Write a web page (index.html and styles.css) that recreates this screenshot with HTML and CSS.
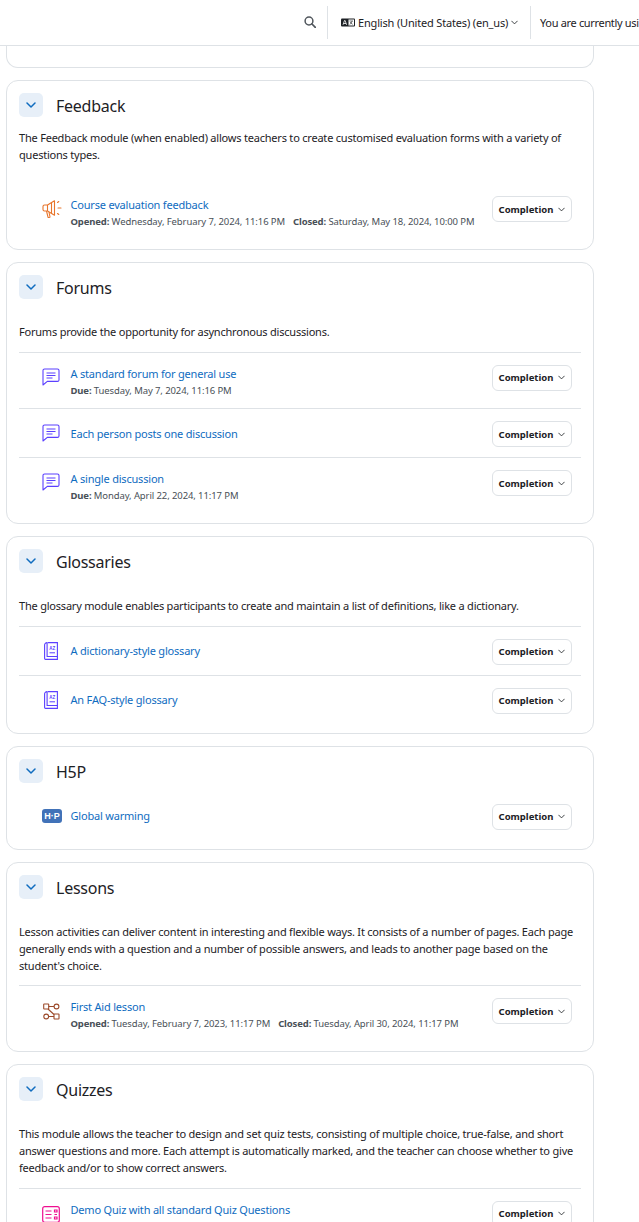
FILE: index.html
```html
<!DOCTYPE html>
<html lang="en">
<head>
<meta charset="utf-8">
<title>Activities</title>
<link rel="stylesheet" href="styles.css">
</head>
<body>
<svg class="defs" width="0" height="0" aria-hidden="true">
  <symbol id="chev" viewBox="0 0 10 6"><path d="M1 1l4 4 4-4" fill="none" stroke="currentColor" stroke-width="1.500" stroke-linecap="round" stroke-linejoin="round"/></symbol>
  <symbol id="forum" viewBox="0 0 18 18"><path d="M1 2.600c0-.9.600-1.600 1.600-1.600h12.800c.9 0 1.600.7 1.600 1.600v9.300c0 .9-.7 1.500-1.600 1.500H5.300L1 17z" fill="none" stroke="currentColor" stroke-width="1.100" stroke-linejoin="round"/><path d="M4.500 5h9M4.500 7.500h9M4.500 10h6" fill="none" stroke="currentColor" stroke-width="1.100"/></symbol>
  <symbol id="gloss" viewBox="0 0 14 18"><path d="M.6 3v13.500c0 .5.400.9.900.9h11.900V.6H3.600" fill="none" stroke="currentColor" stroke-width="1.100"/><path d="M3.100.6v13.900h10.300M.6 3c0-1.400 1-2.400 2.500-2.400" fill="none" stroke="currentColor" stroke-width="1.100"/><path d="M5.500 10.800h5.500" stroke="currentColor" stroke-width="1"/><text x="8.200" y="7.500" class="az">AZ</text></symbol>
  <symbol id="comp" viewBox="0 0 10 6"><path d="M1 1l4 4 4-4" fill="none" stroke="currentColor" stroke-width="1.200" stroke-linecap="round" stroke-linejoin="round"/></symbol>
</svg>

<header class="topbar">
  <div class="topbar-search">
    <svg width="12" height="12" viewBox="0 0 12 12"><circle cx="5" cy="5" r="3.900" fill="none" stroke="#50565c" stroke-width="1.500"/><path d="M8 8l3.300 3.300" stroke="#50565c" stroke-width="1.700" stroke-linecap="round"/></svg>
  </div>
  <div class="topbar-lang">
    <svg width="14" height="9" viewBox="0 0 14 9"><rect width="14" height="8" y=".5" rx="1" fill="#1d2125"/><path d="M2 6.800l1.500-4.300h.6l1.500 4.300M2.700 5.500h2.300" fill="none" stroke="#fff" stroke-width=".8"/><rect x="7.500" y="1.500" width="5.500" height="6" fill="#fff"/><path d="M8.500 3h3.500M11 3c-.2 1.500-1 2.700-2.300 3.400M9.200 4c.4 1 1.200 1.800 2.500 2.300" fill="none" stroke="#1d2125" stroke-width=".6"/></svg>
    <span>English (United States) ‎(en_us)‎</span>
    <svg class="chev-small" width="7" height="5"><use href="#comp"/></svg>
  </div>
  <div class="topbar-status">You are currently using guest access</div>
</header>

<main class="content">
  <section class="card card-stub"></section>

  <section class="card">
    <div class="card-head"><button class="toggle"><svg width="10" height="6"><use href="#chev"/></svg></button><h3>Feedback</h3></div>
    <p class="desc desc-tight">The Feedback module (when enabled) allows teachers to create customised evaluation forms with a variety of questions types.</p>
    <ul class="rows rows-spaced">
      <li class="row row-plain">
        <span class="ico">
          <svg class="c-orange" width="21" height="20" viewBox="0 0 21 20" fill="none" stroke="currentColor" stroke-width="1.100" stroke-linejoin="round"><path d="M12.500 1.800L5.500 6H2.500C1.700 6 1 6.700 1 7.500v3c0 .8.700 1.500 1.500 1.500h3l7 4.200z"/><path d="M5.500 6v6M9.500 3.700v10.500M4.500 12l1.500 6.200c.2.500 1.800.3 2-.2L7 13.200"/><path d="M15.500 3.500l1.300-1M16 9h3M15.500 14.500l1.300 1" stroke-linecap="round"/></svg>
        </span>
        <div class="row-main"><a href="#">Course evaluation feedback</a>
          <div class="dates"><span><b>Opened:</b> Wednesday, February 7, 2024, 11:16 PM</span><span><b>Closed:</b> Saturday, May 18, 2024, 10:00 PM</span></div></div>
        <button class="completion">Completion <svg width="7" height="5"><use href="#comp"/></svg></button>
      </li>
    </ul>
  </section>

  <section class="card">
    <div class="card-head"><button class="toggle"><svg width="10" height="6"><use href="#chev"/></svg></button><h3>Forums</h3></div>
    <p class="desc">Forums provide the opportunity for asynchronous discussions.</p>
    <ul class="rows">
      <li class="row row-up"><span class="ico ico-up"><svg class="c-purple" width="18" height="18"><use href="#forum"/></svg></span>
        <div class="row-main"><a href="#">A standard forum for general use</a><div class="dates"><span><b>Due:</b> Tuesday, May 7, 2024, 11:16 PM</span></div></div>
        <button class="completion">Completion <svg width="7" height="5"><use href="#comp"/></svg></button></li>
      <li class="row row-single"><span class="ico ico-up"><svg class="c-purple" width="18" height="18"><use href="#forum"/></svg></span>
        <div class="row-main"><a href="#">Each person posts one discussion</a></div>
        <button class="completion">Completion <svg width="7" height="5"><use href="#comp"/></svg></button></li>
      <li class="row"><span class="ico ico-up"><svg class="c-purple" width="18" height="18"><use href="#forum"/></svg></span>
        <div class="row-main"><a href="#">A single discussion</a><div class="dates"><span><b>Due:</b> Monday, April 22, 2024, 11:17 PM</span></div></div>
        <button class="completion">Completion <svg width="7" height="5"><use href="#comp"/></svg></button></li>
    </ul>
  </section>

  <section class="card">
    <div class="card-head"><button class="toggle"><svg width="10" height="6"><use href="#chev"/></svg></button><h3>Glossaries</h3></div>
    <p class="desc">The glossary module enables participants to create and maintain a list of definitions, like a dictionary.</p>
    <ul class="rows">
      <li class="row row-single row-up"><span class="ico ico-inset ico-up"><svg class="c-purple" width="14" height="18"><use href="#gloss"/></svg></span>
        <div class="row-main"><a href="#">A dictionary-style glossary</a></div>
        <button class="completion">Completion <svg width="7" height="5"><use href="#comp"/></svg></button></li>
      <li class="row row-single row-up"><span class="ico ico-inset ico-up"><svg class="c-purple" width="14" height="18"><use href="#gloss"/></svg></span>
        <div class="row-main"><a href="#">An FAQ-style glossary</a></div>
        <button class="completion">Completion <svg width="7" height="5"><use href="#comp"/></svg></button></li>
    </ul>
  </section>

  <section class="card">
    <div class="card-head"><button class="toggle"><svg width="10" height="6"><use href="#chev"/></svg></button><h3>H5P</h3></div>
    <ul class="rows rows-nodesc">
      <li class="row row-plain row-single row-up"><span class="ico ico-up">
        <svg width="20" height="14" viewBox="0 0 20 14"><rect width="20" height="14" rx="3" fill="#4172b8"/><text x="10" y="10.300" class="h5p">H·P</text></svg></span>
        <div class="row-main"><a href="#">Global warming</a></div>
        <button class="completion">Completion <svg width="7" height="5"><use href="#comp"/></svg></button></li>
    </ul>
  </section>

  <section class="card">
    <div class="card-head"><button class="toggle"><svg width="10" height="6"><use href="#chev"/></svg></button><h3>Lessons</h3></div>
    <p class="desc desc-snug">Lesson activities can deliver content in interesting and flexible ways. It consists of a number of pages. Each page generally ends with a question and a number of possible answers, and leads to another page based on the student's choice.</p>
    <ul class="rows">
      <li class="row"><span class="ico ico-lesson">
        <svg class="c-brown" width="17" height="17" viewBox="0 0 17 17" fill="none" stroke="currentColor" stroke-width="1.100"><rect x=".7" y="1" width="5" height="5" rx=".5"/><circle cx="13.500" cy="3.500" r="2.400"/><circle cx="3.200" cy="13.500" r="2.400"/><rect x="11" y="11" width="5" height="5" rx=".5"/><path d="M5.700 3.500h5.400M5 6l6 5.500M5.600 13.500h5.400"/></svg></span>
        <div class="row-main"><a href="#">First Aid lesson</a><div class="dates"><span><b>Opened:</b> Tuesday, February 7, 2023, 11:17 PM</span><span><b>Closed:</b> Tuesday, April 30, 2024, 11:17 PM</span></div></div>
        <button class="completion">Completion <svg width="7" height="5"><use href="#comp"/></svg></button></li>
    </ul>
  </section>

  <section class="card">
    <div class="card-head"><button class="toggle"><svg width="10" height="6"><use href="#chev"/></svg></button><h3>Quizzes</h3></div>
    <p class="desc">This module allows the teacher to design and set quiz tests, consisting of multiple choice, true-false, and short answer questions and more. Each attempt is automatically marked, and the teacher can choose whether to give feedback and/or to show correct answers.</p>
    <ul class="rows">
      <li class="row row-up"><span class="ico">
        <svg class="c-pink" width="18" height="17" viewBox="0 0 18 17" fill="none" stroke="currentColor" stroke-width="1.200"><rect x=".7" y=".7" width="16.600" height="15.600" rx="2"/><path d="M3.500 5h6M3.500 8.500h6M3.500 12h6M12.500 4h2.500v2h-2.500zM12.500 8.500h2.500M12.500 11h2.500v2h-2.500z"/></svg></span>
        <div class="row-main"><a href="#">Demo Quiz with all standard Quiz Questions</a></div>
        <button class="completion">Completion <svg width="7" height="5"><use href="#comp"/></svg></button></li>
    </ul>
  </section>
</main>
</body>
</html>
```
FILE: styles.css
```css
* { box-sizing: border-box; }
html, body { margin: 0; height: 1222px; overflow: hidden; background: #fff; }
body { font-family: "Noto Sans", "Open Sans", Arial, sans-serif; font-size: 11px; letter-spacing: -0.21px; line-height: 17px; color: #1d2125; }
.defs { position: absolute; }
.az { font-size: 4.500px; font-weight: 700; letter-spacing: 0; fill: currentColor; text-anchor: middle; font-family: "Liberation Sans", sans-serif; }
.h5p { font-size: 9px; font-weight: 700; letter-spacing: 0; fill: #fff; text-anchor: middle; font-family: "Liberation Sans", sans-serif; }

.topbar { height: 46px; display: flex; align-items: center; justify-content: flex-end; border-bottom: 1px solid #dee2e6; background: #fff; }
.topbar-search { display: flex; align-items: center; height: 33px; padding: 0 11px 0 0; border-right: 1px solid #dee2e6; margin-bottom: 1px; }
.topbar-lang { display: flex; align-items: center; height: 33px; width: 203px; padding-left: 13px; gap: 3px; border-right: 1px solid #dee2e6; margin-bottom: 1px; white-space: nowrap; flex-shrink: 0; letter-spacing: -0.17px; }
.chev-small { color: #1d2125; }
.topbar-status { width: 108px; flex-shrink: 0; padding-left: 9px; white-space: nowrap; overflow: hidden; margin-bottom: 1px; letter-spacing: -0.33px; }

.content { padding: 0 45px 0 6px; display: flex; flex-direction: column; gap: 12px; }
.card { border: 1px solid #dee2e6; border-radius: 12px; padding: 12px 12px 10px; background: #fff; flex-shrink: 0; }
.card-stub { height: 22px; padding: 0; border-top: 0; border-top-left-radius: 0; border-top-right-radius: 0; }
.card-head { display: flex; align-items: center; gap: 13px; height: 24px; }
.card-head h3 { margin: 0; padding-top: 1px; font-size: 16px; letter-spacing: -0.25px; font-weight: 400; line-height: 24px; }
.toggle { width: 24px; height: 24px; border: 0; border-radius: 5px; background: #e7eff8; color: #0f6cbf; display: flex; align-items: center; justify-content: center; padding: 0; }
.desc { margin: 24px 0 12px; }
.desc-tight { margin-top: 12px; }
.desc-snug { margin-bottom: 11px; }
.rows { list-style: none; margin: 0; padding: 0; }
.rows-spaced { padding-top: 8px; }
.rows-nodesc { margin-top: 8px; }
.row { display: flex; align-items: flex-start; padding: 12px 9px 10px 22px; border-top: 1px solid #dee2e6; }
.row-plain { border-top-color: transparent; }
.row-single { align-items: center; }
.row-single:last-child { padding-bottom: 9px; }
.ico { width: 29.500px; height: 26px; flex-shrink: 0; display: flex; align-items: center; padding-left: 1px; }
.ico-inset { padding-left: 3px; }
.ico-lesson { padding-left: 2px; }
.ico-up svg { margin-top: -2px; }
.row-main { flex: 1; min-width: 0; margin-top: 1px; }
.row-single .row-main { margin-top: 0; }
.row-single.row-up .row-main { margin-bottom: 2px; }
.row-up .completion { padding-bottom: 2px; }
.row-main a { display: block; color: #0f6cbf; text-decoration: none; line-height: 16px; letter-spacing: -0.2px; }
.dates { display: flex; gap: 8px; margin: 1px 0 -1px; font-size: 9.500px; letter-spacing: -0.1px; line-height: 16px; color: #495057; }
.dates b { font-weight: 700; letter-spacing: -0.14px; }
.completion { display: flex; align-items: center; gap: 5px; height: 26px; width: 80px; margin-left: 8px; flex-shrink: 0; justify-content: center; padding: 0; border: 1px solid #dee2e6; border-radius: 6px; background: #fff; font: 700 9.500px "Noto Sans", sans-serif; letter-spacing: 0; color: #1d2125; }
.c-orange { color: #e8752b; }
.c-purple { color: #5b40ff; }
.c-brown { color: #9c4a2b; }
.c-pink { color: #ee0f90; }
```
